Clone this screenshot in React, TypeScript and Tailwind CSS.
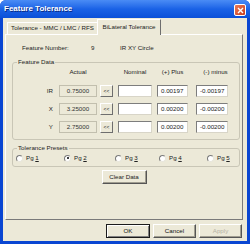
import React from 'react';

const font = "font-['Liberation_Sans',Arial,sans-serif]";

const Button = ({ label, kind }: { label: React.ReactNode; kind?: 'default' | 'disabled' }) => {
  const base = 'flex items-center justify-center h-[14px] bg-[#ece9d8] text-[6.2px] leading-none';
  if (kind === 'default') {
    return (
      <div className={`${base} w-[44px] border border-[#1b1b1b] shadow-[inset_1px_1px_0_#fff,inset_-1px_-1px_0_#808080] text-[#111]`}>
        {label}
      </div>
    );
  }
  if (kind === 'disabled') {
    return (
      <div className={`${base} w-[43px] border border-t-white border-l-white border-r-[#555] border-b-[#555] shadow-[inset_-1px_-1px_0_#a09d90] text-[#b5b2a4]`}>
        {label}
      </div>
    );
  }
  return (
    <div className={`${base} w-[43px] border border-t-white border-l-white border-r-[#555] border-b-[#555] shadow-[inset_-1px_-1px_0_#a09d90] text-[#111]`}>
      {label}
    </div>
  );
};

const Radio = ({ n, checked, w }: { n: string; checked?: boolean; w: string }) => (
  <div className={`flex items-center h-[10px] ${w}`}>
    <div className="flex items-center justify-center w-[7px] h-[7px] rounded-full bg-white border border-t-[#7a7a7a] border-l-[#7a7a7a] border-r-[#e8e6dc] border-b-[#e8e6dc]">
      {checked && <div className="w-[2px] h-[2px] rounded-full bg-black" />}
    </div>
    <span className="ml-[3px] text-[6.2px] leading-none text-[#222]">
      Pg <span className="underline">{n}</span>
    </span>
  </div>
);

const rows = [
  { label: 'IR', actual: '0.75000', plus: '0.00197', minus: '-0.00197' },
  { label: 'X', actual: '3.25000', plus: '0.00200', minus: '-0.00200' },
  { label: 'Y', actual: '2.75000', plus: '0.00200', minus: '-0.00200' },
];

const sunken = 'h-[12px] bg-white border border-t-[#7d7d7d] border-l-[#7d7d7d] border-r-[#d8d5c8] border-b-[#d8d5c8] text-[6.2px] leading-[10px] pl-[3px] text-[#222]';

export default function App() {
  return (
    <div className={`${font} w-[250px] h-[244px] flex flex-col bg-[#0a46d2] rounded-t-[6px] overflow-hidden`}>
      {/* Title bar */}
      <div className="h-[18px] flex items-center justify-between pl-[4px] pr-[4px] bg-gradient-to-b from-[#4a8cf5] via-[#1a62e6] to-[#0b50d8]">
        <span className="text-[8px] font-bold text-white leading-none [text-shadow:1px_1px_0_#0a2a80]">Feature Tolerance</span>
        <div className="mt-[2px] w-[12px] h-[12px] rounded-[2px] border border-white bg-gradient-to-br from-[#ec7a55] to-[#c8391a] flex items-center justify-center">
          <svg width="7" height="7" viewBox="0 0 7 7">
            <path d="M1 1 L6 6 M6 1 L1 6" stroke="white" strokeWidth="1.4" />
          </svg>
        </div>
      </div>

      {/* Body */}
      <div className="flex-1 mx-[3px] mb-[3px] bg-[#ece9d8] flex flex-col">
        {/* Tabs */}
        <div className="h-[16px] flex items-end pl-[4px]">
          <div className="w-[90px] h-[12px] flex items-center justify-center border-t border-l border-t-white border-l-white text-[6.2px] leading-none text-[#222]">
            Tolerance - MMC / LMC / RFS
          </div>
          <div className="relative z-10 -mb-px w-[64px] h-[16px] flex items-center justify-center bg-[#ece9d8] border-t border-l border-r border-t-white border-l-white border-r-[#6e6e6e] text-[6.2px] leading-none text-[#222]">
            BiLateral Tolerance
          </div>
        </div>

        {/* Panel */}
        <div className="ml-[2px] w-[238px] h-[186px] flex flex-col border border-t-white border-l-white border-r-[#7a7a7a] border-b-[#7a7a7a] text-[#222]">
          <div className="mt-[9px] h-[8px] flex items-center pl-[16px] text-[6.2px] leading-none">
            <span className="w-[69px]">Feature Number:</span>
            <span className="w-[29px]">9</span>
            <span>IR XY Circle</span>
          </div>

          <fieldset className="mt-[6px] ml-[6px] w-[228px] border border-[#c9c6b6] rounded-[3px] pb-[6px]">
            <legend className="ml-[4px] px-[1px] text-[6.2px] leading-[8px]">Feature Data</legend>
            <div className="mt-[2px] h-[8px] flex items-center text-[6.2px] leading-none">
              <div className="w-[42px]" />
              <div className="ml-[4px] w-[38px] text-center">Actual</div>
              <div className="ml-[3px] w-[13px]" />
              <div className="ml-[5px] w-[34px] text-center">Nominal</div>
              <div className="ml-[5px] w-[31px] text-center">(+) Plus</div>
              <div className="ml-[8px] w-[32px] pl-[7px] text-center">(-) minus</div>
            </div>
            <div className="mt-[9px] flex flex-col gap-[6px]">
              {rows.map((r) => (
                <div key={r.label} className="flex items-center h-[12px]">
                  <div className="w-[42px] pr-[2px] text-right text-[6.2px] leading-none">{r.label}</div>
                  <div className="ml-[4px] w-[38px] h-[12px] flex items-center justify-center border border-[#c2bfae] text-[6.2px] leading-none text-[#333]">
                    {r.actual}
                  </div>
                  <div className="ml-[3px] w-[13px] h-[12px] flex items-center justify-center border border-t-white border-l-white border-r-[#6e6e6e] border-b-[#6e6e6e] text-[5px] leading-none">
                    &lt;&lt;
                  </div>
                  <div className={`ml-[5px] w-[34px] ${sunken}`} />
                  <div className={`ml-[5px] w-[31px] ${sunken}`}>{r.plus}</div>
                  <div className={`ml-[8px] w-[32px] ${sunken}`}>{r.minus}</div>
                </div>
              ))}
            </div>
          </fieldset>

          <fieldset className="mt-[4px] ml-[6px] w-[228px] border border-[#c9c6b6] rounded-[3px] pb-[3px]">
            <legend className="ml-[4px] px-[1px] text-[6.2px] leading-[8px]">Tolerance Presets</legend>
            <div className="mt-[1px] flex items-center pl-[3px]">
              <Radio n="1" w="w-[48px]" />
              <Radio n="2" w="w-[51px]" checked />
              <Radio n="3" w="w-[44px]" />
              <Radio n="4" w="w-[48px]" />
              <Radio n="5" w="w-[24px]" />
            </div>
          </fieldset>

          <div className="mt-[3px] mx-auto">
            <div className="flex items-center justify-center w-[45px] h-[14px] bg-[#ece9d8] border border-t-white border-l-white border-r-[#555] border-b-[#555] shadow-[inset_-1px_-1px_0_#a09d90] text-[6.2px] leading-none">
              Clear Data
            </div>
          </div>
        </div>

        {/* Bottom buttons */}
        <div className="mt-[4px] flex justify-end gap-[3px] pr-[5px]">
          <Button label="OK" kind="default" />
          <Button label="Cancel" />
          <Button label="Apply" kind="disabled" />
        </div>
      </div>
    </div>
  );
}
